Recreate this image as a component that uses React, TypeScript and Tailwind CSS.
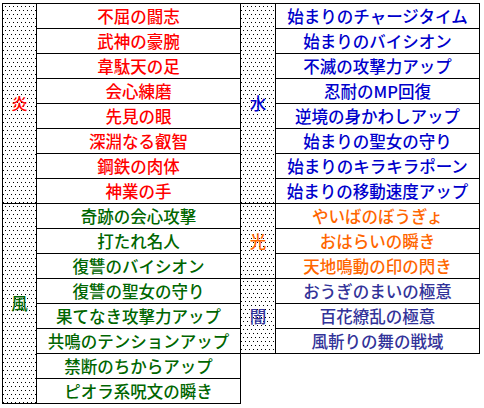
import React from "react";

type Group = { label: string; color: string; rows: string[]; labelW: string };

const LEFT: Group[] = [
  {
    label: "炎",
    color: "text-[#ff0000]",
    labelW: "w-[34px]",
    rows: ["不屈の闘志", "武神の豪腕", "韋駄天の足", "会心練磨", "先見の眼", "深淵なる叡智", "鋼鉄の肉体", "神業の手"],
  },
  {
    label: "風",
    color: "text-[#006600]",
    labelW: "w-[34px]",
    rows: [
      "奇跡の会心攻撃",
      "打たれ名人",
      "復讐のバイシオン",
      "復讐の聖女の守り",
      "果てなき攻撃力アップ",
      "共鳴のテンションアップ",
      "禁断のちからアップ",
      "ピオラ系呪文の瞬き",
    ],
  },
];

const RIGHT: Group[] = [
  {
    label: "水",
    color: "text-[#0000cc]",
    labelW: "w-[35px]",
    rows: [
      "始まりのチャージタイム",
      "始まりのバイシオン",
      "不滅の攻撃力アップ",
      "忍耐のMP回復",
      "逆境の身かわしアップ",
      "始まりの聖女の守り",
      "始まりのキラキラポーン",
      "始まりの移動速度アップ",
    ],
  },
  {
    label: "光",
    color: "text-[#ff6600]",
    labelW: "w-[35px]",
    rows: ["やいばのぼうぎょ", "おはらいの瞬き", "天地鳴動の印の閃き"],
  },
  {
    label: "闇",
    color: "text-[#333399]",
    labelW: "w-[35px]",
    rows: ["おうぎのまいの極意", "百花繚乱の極意", "風斬りの舞の戦域"],
  },
];

// dotted fill like a spreadsheet 12.5% pattern
const DOTS =
  "bg-[conic-gradient(at_1px_1px,transparent_270deg,#000_270deg),conic-gradient(at_1px_1px,transparent_270deg,#000_270deg)] bg-[length:4px_8px] bg-[position:2px_2px,0px_6px]";

function GroupBlock({ g }: { g: Group }) {
  return (
    <div className="flex border-b border-black">
      <div className={`${g.labelW} ${DOTS} shrink-0 border-r border-black flex items-center justify-center ${g.color}`}>
        {g.label}
      </div>
      <div className="flex-1 flex flex-col">
        {g.rows.map((r, i) => (
          <div
            key={r}
            className={`flex items-center justify-center ${g.color} ${
              i < g.rows.length - 1 ? "h-[25px] border-b border-black" : "h-[24px]"
            }`}
          >
            {r}
          </div>
        ))}
      </div>
    </div>
  );
}

export default function App() {
  return (
    <div className="w-[484px] h-[408px] bg-white pt-[3px] pl-[2px] text-[16.5px] font-medium leading-none font-['Noto_Sans_CJK_JP',sans-serif]">
      <div className="flex items-start">
        <div className="w-[239px] border-t border-l border-r border-black flex flex-col">
          {LEFT.map((g) => (
            <GroupBlock key={g.label} g={g} />
          ))}
        </div>
        <div className="w-[239px] border-t border-r border-black flex flex-col">
          {RIGHT.map((g) => (
            <GroupBlock key={g.label} g={g} />
          ))}
        </div>
      </div>
    </div>
  );
}
